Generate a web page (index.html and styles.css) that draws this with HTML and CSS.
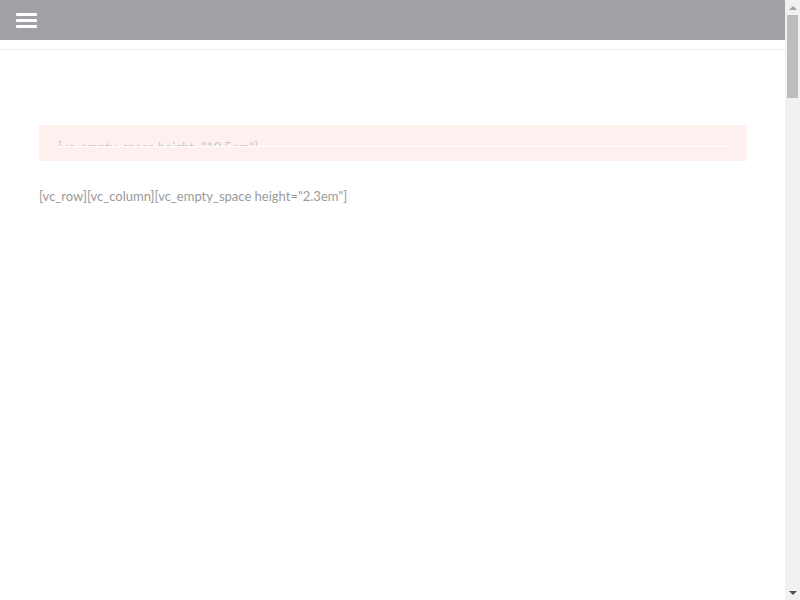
FILE: index.html
```html
<!DOCTYPE html>
<html>
<head>
<meta charset="utf-8">
<link rel="stylesheet" href="styles.css">
</head>
<body>
<div class="page">
  <header class="topbar">
    <button class="menu" aria-label="Menu"><span></span><span></span><span></span></button>
  </header>
  <div class="divider"></div>
  <main class="content">
    <div class="notice">
      <div class="notice-text">[vc_empty_space height="10.5em"]</div>
    </div>
    <p class="shortcode">[vc_row][vc_column][vc_empty_space height="2.3em"]</p>
  </main>
</div>
<div class="scrollbar" aria-hidden="true">
  <div class="arrow up"></div>
  <div class="track"><div class="thumb"></div></div>
  <div class="arrow down"></div>
</div>
</body>
</html>
```
FILE: styles.css
```css
html, body {
  margin: 0;
  padding: 0;
  background: #fff;
  height: 100%;
  overflow: hidden;
}
body {
  font-family: Lato, "Liberation Sans", sans-serif;
  display: flex;
}
.page {
  flex: 1;
  min-width: 0;
}
.topbar {
  height: 40px;
  background: #9fa1a5;
  display: flex;
  align-items: center;
  padding-left: 16px;
}
.menu {
  background: none;
  border: 0;
  padding: 0;
  width: 21px;
  display: flex;
  flex-direction: column;
  gap: 3px;
  margin-top: 1px;
}
.menu span {
  display: block;
  height: 3px;
  width: 21px;
  background: #fff;
  border-radius: 1px;
}
.divider {
  height: 1px;
  background: #efefef;
  margin-top: 9px;
}
.content {
  padding: 75px 38px 0 39px;
}
.notice {
  background: #fff0f0;
  height: 36px;
  padding: 0 20px 0 19px;
}
.notice-text {
  height: 22px;
  overflow: hidden;
  border-bottom: 1px solid #fff;
  font-size: 13px;
  line-height: 16px;
  padding-top: 14px;
  box-sizing: border-box;
  color: #c8c8c8;
}
.shortcode {
  margin: 27px 0 0;
  font-size: 13px;
  line-height: 17px;
  color: #9a9a9a;
}
.scrollbar {
  width: 15px;
  height: 600px;
  background: #f1f1f1;
  display: flex;
  flex-direction: column;
  flex-shrink: 0;
}
.arrow {
  height: 15px;
  display: flex;
  align-items: center;
  justify-content: center;
}
.arrow.up::before,
.arrow.down::before {
  content: "";
  width: 0;
  height: 0;
  border-left: 4px solid transparent;
  border-right: 4px solid transparent;
}
.arrow.up::before {
  border-bottom: 4px solid #a3a3a3;
}
.arrow.down::before {
  border-top: 4px solid #505050;
}
.track {
  flex: 1;
  padding: 0 2px;
}
.thumb {
  height: 83px;
  background: #bdbdbd;
}
```
